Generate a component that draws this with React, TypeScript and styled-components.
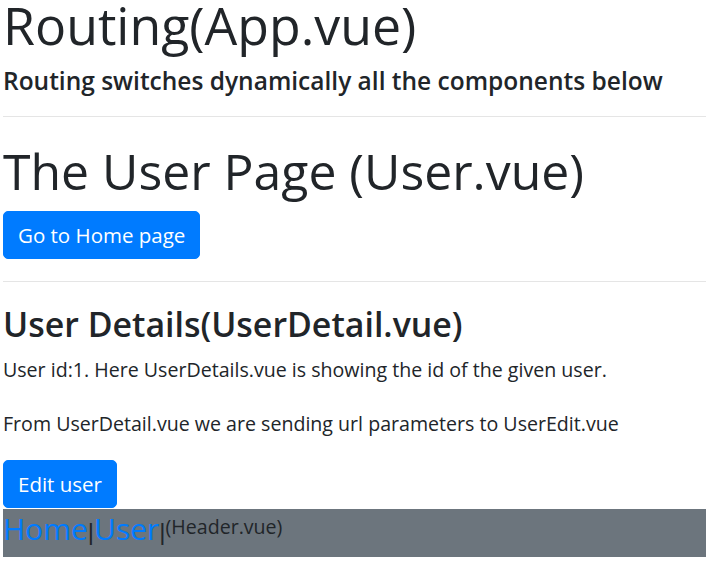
import React from "react";
import styled, { createGlobalStyle } from "styled-components";

const GlobalStyle = createGlobalStyle`
  html, body {
    margin: 0;
    padding: 0;
    background: #ffffff;
  }
  body {
    font-family: "Open Sans", "Noto Sans", "Liberation Sans", sans-serif;
    color: #212529;
    font-size: 20px;
    line-height: 30px;
  }
  * { box-sizing: border-box; }
`;

const Page = styled.div`
  width: 703px;
  margin-left: 3px;
  display: flex;
  flex-direction: column;
  align-items: stretch;
`;

const Heading = styled.h1<{ $compact?: boolean; $size: number }>`
  margin: 0 0 ${(p) => (p.$compact ? 16 : 10)}px;
  font-size: ${(p) => p.$size}px;
  line-height: ${(p) => (p.$compact ? 50 : 60)}px;
  font-weight: 400;
  white-space: nowrap;
`;

const Lead = styled.h5`
  margin: 0;
  font-size: 24.5px;
  line-height: 30px;
  font-weight: 600;
  white-space: nowrap;
`;

const Divider = styled.hr<{ $top: number; $bottom: number }>`
  margin: ${(p) => p.$top}px 0 ${(p) => p.$bottom}px;
  border: 0;
  border-top: 1px solid rgba(0, 0, 0, 0.1);
  height: 0;
  width: 100%;
`;

const ButtonRow = styled.div<{ $bottom?: number }>`
  display: flex;
  margin-bottom: ${(p) => p.$bottom ?? 0}px;
`;

const PrimaryButton = styled.button`
  display: inline-flex;
  align-items: center;
  height: 48px;
  padding: 0 14px;
  border: 1px solid #007bff;
  border-radius: 5px;
  background: #007bff;
  color: #ffffff;
  font-family: inherit;
  font-size: 20.5px;
  line-height: 30px;
  cursor: pointer;
`;

const SubHeading = styled.h3`
  margin: 0 0 10px;
  font-size: 33.9px;
  line-height: 42px;
  font-weight: 600;
  white-space: nowrap;
`;

const Text = styled.p<{ $bottom: number }>`
  margin: 0 0 ${(p) => p.$bottom}px;
  font-size: 19.6px;
  line-height: 30px;
  white-space: nowrap;
`;

const HeaderBar = styled.nav`
  display: flex;
  align-items: flex-start;
  height: 48px;
  background: #6c757d;
`;

const NavLink = styled.a`
  color: #007bff;
  text-decoration: none;
  font-size: 30px;
  line-height: 40px;
  font-weight: 400;
`;

const Separator = styled.span`
  color: #212529;
  font-family: "Liberation Sans", sans-serif;
  font-size: 24px;
  line-height: 30px;
  margin: 8px 0 0;
`;

const HeaderNote = styled.span`
  color: #212529;
  font-size: 19.6px;
  line-height: 30px;
  margin: 3px 0 0 0;
`;

export default function App() {
  return (
    <>
      <GlobalStyle />
      <Page>
        <Heading $compact $size={51.8}>Routing(App.vue)</Heading>
        <Lead>Routing switches dynamically all the components below</Lead>
        <Divider $top={20} $bottom={24} />
        <Heading $size={49.9}>The User Page (User.vue)</Heading>
        <ButtonRow>
          <PrimaryButton type="button">Go to Home page</PrimaryButton>
        </ButtonRow>
        <Divider $top={22} $bottom={21} />
        <SubHeading>User Details(UserDetail.vue)</SubHeading>
        <Text $bottom={24}>User id:1. Here UserDetails.vue is showing the id of the given user.</Text>
        <Text $bottom={21}>From UserDetail.vue we are sending url parameters to UserEdit.vue</Text>
        <ButtonRow $bottom={1}>
          <PrimaryButton type="button">Edit user</PrimaryButton>
        </ButtonRow>
        <HeaderBar>
          <NavLink href="#/">Home</NavLink>
          <Separator>|</Separator>
          <NavLink href="#/user">User</NavLink>
          <Separator>|</Separator>
          <HeaderNote>(Header.vue)</HeaderNote>
        </HeaderBar>
      </Page>
    </>
  );
}
